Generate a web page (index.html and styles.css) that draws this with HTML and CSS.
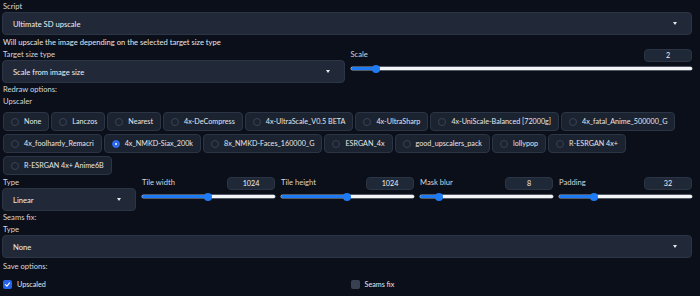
FILE: index.html
```html
<!DOCTYPE html>
<html lang="en">
<head>
    <meta charset="UTF-8">
    <title>Ultimate SD upscale</title>
    <link rel="stylesheet" href="styles.css">
</head>
<body>
    <div class="label">Script</div>
    <div class="dropdown">
        <span>Ultimate SD upscale</span>
        <span class="arrow"></span>
    </div>
    <div class="info">Will upscale the image depending on the selected target size type</div>

    <div class="row two">
        <div class="col">
            <div class="label">Target size type</div>
            <div class="dropdown">
                <span>Scale from image size</span>
                <span class="arrow"></span>
            </div>
        </div>
        <div class="col">
            <div class="slider-head">
                <div class="label">Scale</div>
                <div class="number">2</div>
            </div>
            <div class="track"><div class="fill" style="width: 7.6%"></div></div>
        </div>
    </div>

    <div class="label">Redraw options:</div>
    <div class="label">Upscaler</div>
    <div class="radios">
        <label class="radio"><span class="dot"></span>None</label>
        <label class="radio"><span class="dot"></span>Lanczos</label>
        <label class="radio"><span class="dot"></span>Nearest</label>
        <label class="radio"><span class="dot"></span>4x-DeCompress</label>
        <label class="radio"><span class="dot"></span>4x-UltraScale_V0.5 BETA</label>
        <label class="radio"><span class="dot"></span>4x-UltraSharp</label>
        <label class="radio"><span class="dot"></span>4x-UniScale-Balanced [72000g]</label>
        <label class="radio"><span class="dot"></span>4x_fatal_Anime_500000_G</label>
        <label class="radio"><span class="dot"></span>4x_foolhardy_Remacri</label>
        <label class="radio"><span class="dot checked"></span>4x_NMKD-Siax_200k</label>
        <label class="radio"><span class="dot"></span>8x_NMKD-Faces_160000_G</label>
        <label class="radio"><span class="dot"></span>ESRGAN_4x</label>
        <label class="radio"><span class="dot"></span>good_upscalers_pack</label>
        <label class="radio"><span class="dot"></span>lollypop</label>
        <label class="radio"><span class="dot"></span>R-ESRGAN 4x+</label>
        <label class="radio"><span class="dot"></span>R-ESRGAN 4x+ Anime6B</label>
    </div>

    <div class="row five">
        <div class="col">
            <div class="label">Type</div>
            <div class="dropdown">
                <span>Linear</span>
                <span class="arrow"></span>
            </div>
        </div>
        <div class="col">
            <div class="slider-head">
                <div class="label">Tile width</div>
                <div class="number">1024</div>
            </div>
            <div class="track"><div class="fill" style="width: 49.6%"></div></div>
        </div>
        <div class="col">
            <div class="slider-head">
                <div class="label">Tile height</div>
                <div class="number">1024</div>
            </div>
            <div class="track"><div class="fill" style="width: 49.3%"></div></div>
        </div>
        <div class="col">
            <div class="slider-head">
                <div class="label">Mask blur</div>
                <div class="number">8</div>
            </div>
            <div class="track"><div class="fill" style="width: 14%"></div></div>
        </div>
        <div class="col">
            <div class="slider-head">
                <div class="label">Padding</div>
                <div class="number">32</div>
            </div>
            <div class="track"><div class="fill" style="width: 26%"></div></div>
        </div>
    </div>

    <div class="label">Seams fix:</div>
    <div class="label">Type</div>
    <div class="dropdown">
        <span>None</span>
        <span class="arrow"></span>
    </div>

    <div class="label save">Save options:</div>
    <div class="row two checks">
        <label class="check"><span class="box on">
            <svg viewBox="0 0 10 10" width="7" height="7"><path d="M2 5.2 L4.2 7.3 L8 2.8" fill="none" stroke="#fff" stroke-width="1.6" stroke-linecap="round" stroke-linejoin="round"/></svg>
        </span>Upscaled</label>
        <label class="check"><span class="box"></span>Seams fix</label>
    </div>
</body>
</html>
```

FILE: styles.css
```css
body {
    margin: 0;
    padding: 0 8px 0 2px;
    background: #0b0f19;
    color: #e5e7eb;
    font-family: Lato, "Noto Sans", sans-serif;
    font-size: 7.6px;
}
.label {
    line-height: 12px;
    padding-left: 1px;
    color: #d4d7dd;
}
.info {
    line-height: 12px;
    padding-left: 1px;
    margin-top: 1px;
}
.dropdown {
    height: 23px;
    box-sizing: border-box;
    border: 1px solid #2c3545;
    border-radius: 4px;
    background: #212938;
    display: flex;
    align-items: center;
    justify-content: space-between;
    padding: 0 14px 0 10px;
    color: #eef0f3;
}
.arrow {
    width: 0;
    height: 0;
    border-left: 2.5px solid transparent;
    border-right: 2.5px solid transparent;
    border-top: 3px solid #e5e7eb;
}
.row {
    display: grid;
    gap: 5px;
}
.row.two {
    grid-template-columns: 1fr 1fr;
}
.row.five {
    grid-template-columns: repeat(5, 1fr);
    margin-top: 1px;
}
.slider-head {
    display: flex;
    justify-content: space-between;
    align-items: flex-start;
    height: 16px;
}
.number {
    width: 48px;
    height: 13px;
    box-sizing: border-box;
    margin-top: 1px;
    border: 1px solid #2c3545;
    border-radius: 4px;
    background: #1f2837;
    text-align: center;
    line-height: 11px;
    font-size: 7.2px;
    color: #eef0f3;
}
.track {
    position: relative;
    height: 3px;
    margin: 3px 0 0 1px;
    background: #f3f4f6;
    border-radius: 2px;
    box-shadow: 0 0 0 0.5px #9ca3af;
}
.fill {
    position: relative;
    height: 100%;
    background: #1f7bf4;
    border-radius: 2px;
}
.fill::after {
    content: "";
    position: absolute;
    right: -4px;
    top: -2.5px;
    width: 8px;
    height: 8px;
    border-radius: 50%;
    background: #1f7bf4;
}
.radios {
    display: flex;
    flex-wrap: wrap;
    gap: 3px 2px;
    margin-top: 5px;
    padding-left: 1px;
}
.radio {
    display: flex;
    align-items: center;
    height: 19px;
    box-sizing: border-box;
    padding: 0 7px;
    border: 1px solid #2c3545;
    border-radius: 4px;
    background: #1b2230;
    font-size: 7.2px;
    color: #e5e7eb;
}
.dot {
    width: 8px;
    height: 8px;
    box-sizing: border-box;
    border-radius: 50%;
    border: 1px solid #3a4354;
    background: #1b2230;
    margin-right: 5px;
}
.dot.checked {
    background: #2563eb;
    border-color: #2563eb;
    box-shadow: inset 0 0 0 2px #2563eb, inset 0 0 0 4px #fff;
}
.save {
    margin-top: 2px;
}
.checks {
    margin-top: 8px;
}
.check {
    display: flex;
    align-items: center;
    font-size: 7.2px;
    padding-left: 1px;
}
.box {
    width: 9px;
    height: 9px;
    box-sizing: border-box;
    border-radius: 2px;
    background: #374151;
    margin-right: 5px;
    display: flex;
    align-items: center;
    justify-content: center;
}
.box.on {
    background: #2563eb;
}
```
